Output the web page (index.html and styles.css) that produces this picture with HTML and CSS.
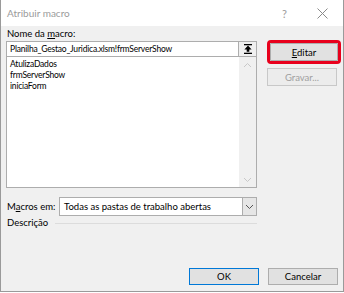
FILE: index.html
```html
<!DOCTYPE html>
<html lang="pt">
<head>
    <meta charset="UTF-8">
    <title>Atribuir macro</title>
    <link rel="stylesheet" href="styles.css">
</head>
<body>
    <div class="dialog">
        <div class="titlebar">
            <span class="title">Atribuir macro</span>
            <span class="help">?</span>
            <svg class="close" width="11" height="11" viewBox="0 0 11 11">
                <path d="M0.5 0.5 L10.5 10.5 M10.5 0.5 L0.5 10.5" stroke="#8a8a8a" stroke-width="1" fill="none"/>
            </svg>
        </div>
        <div class="content">
            <div class="left">
                <div class="label">Nome da <u>m</u>acro:</div>
                <div class="name-row">
                    <div class="name-input">Planilha_Gestao_Juridica.xlsm!frmServerShow</div>
                    <div class="pick-btn">
                        <svg width="8" height="10" viewBox="0 0 8 10">
                            <rect x="0" y="0" width="8" height="1.3" fill="#000"/>
                            <path d="M4 1.6 L7.6 5.4 L5.3 5.4 L5.3 7.8 L2.7 7.8 L2.7 5.4 L0.4 5.4 Z" fill="#000"/>
                            <rect x="0" y="8.7" width="8" height="1.3" fill="#000"/>
                        </svg>
                    </div>
                </div>
                <div class="listbox">
                    <ul class="items">
                        <li>AtulizaDados</li>
                        <li>frmServerShow</li>
                        <li>iniciaForm</li>
                    </ul>
                    <div class="scroll">
                        <svg width="9" height="6" viewBox="0 0 9 6"><path d="M1 5 L4.5 1.5 L8 5" stroke="#c8c8c8" fill="none"/></svg>
                        <svg width="9" height="6" viewBox="0 0 9 6"><path d="M1 1 L4.5 4.5 L8 1" stroke="#c8c8c8" fill="none"/></svg>
                    </div>
                </div>
                <div class="macros-row">
                    <span class="label">M<u>a</u>cros em:</span>
                    <div class="select">
                        <span class="select-text">Todas as pastas de trabalho abertas</span>
                        <span class="select-arrow">
                            <svg width="9" height="6" viewBox="0 0 9 6"><path d="M1 1 L4.5 4.5 L8 1" stroke="#555" fill="none"/></svg>
                        </span>
                    </div>
                </div>
                <div class="desc-row">
                    <span class="label">Descrição</span>
                    <span class="rule"></span>
                </div>
            </div>
            <div class="right">
                <div class="highlight">
                    <button class="btn"><u>E</u>ditar</button>
                </div>
                <button class="btn disabled">Gravar...</button>
            </div>
        </div>
        <div class="footer">
            <button class="btn default">OK</button>
            <button class="btn">Cancelar</button>
        </div>
    </div>
</body>
</html>
```

FILE: styles.css
```css
body {
    margin: 0;
    padding: 0;
    background-color: #fff;
    font-family: Lato, "Noto Sans", sans-serif;
    font-size: 9.5px;
    color: #000;
}

.dialog {
    width: 342px;
    height: 291px;
    border: 1px solid #9a9a9a;
    border-top: none;
    background-color: #f0f0f0;
    display: flex;
    flex-direction: column;
}

.titlebar {
    height: 26px;
    background-color: #fff;
    display: flex;
    align-items: center;
    padding-left: 6px;
}

.title {
    flex: 1;
    font-size: 10px;
    color: #9b9b9b;
}

.help {
    font-size: 11px;
    color: #9b9b9b;
    margin-right: 30px;
}

.close {
    margin-right: 15px;
}

.content {
    display: flex;
    padding: 0 5px 0 5px;
    gap: 9px;
}

.left {
    width: 253px;
}

.label {
    height: 15px;
    line-height: 16px;
    padding-left: 1px;
}

.name-row {
    display: flex;
    height: 16px;
    border: 1px solid #adadad;
    background-color: #fff;
    box-sizing: border-box;
}

.name-input {
    flex: 1;
    line-height: 14px;
    padding-left: 3px;
    font-size: 8.5px;
    letter-spacing: -0.2px;
}

.pick-btn {
    width: 17px;
    border-left: 1px solid #adadad;
    background-color: #f0f0f0;
    display: flex;
    align-items: center;
    justify-content: center;
}

.listbox {
    height: 131px;
    border: 1px solid #adadad;
    border-top: none;
    background-color: #fff;
    display: flex;
    box-sizing: border-box;
}

.items {
    flex: 1;
    list-style-type: none;
    margin: 0;
    padding: 2px 0 0 3px;
    font-size: 8.5px;
    letter-spacing: -0.2px;
}

.items li {
    height: 11px;
    line-height: 11px;
}

.scroll {
    width: 17px;
    background-color: #f0f0f0;
    display: flex;
    flex-direction: column;
    justify-content: space-between;
    align-items: center;
    padding: 5px 0 4px 0;
}

.macros-row {
    display: flex;
    align-items: center;
    margin-top: 9px;
    height: 19px;
}

.macros-row .label {
    width: 52px;
    height: auto;
}

.select {
    flex: 1;
    height: 19px;
    display: flex;
    border: 1px solid #adadad;
    background-color: #fff;
    box-sizing: border-box;
}

.select-text {
    flex: 1;
    padding-left: 4px;
    line-height: 17px;
}

.select-arrow {
    width: 13px;
    border-left: 1px solid #adadad;
    background-color: #e6e6e6;
    display: flex;
    align-items: center;
    justify-content: center;
}

.desc-row {
    display: flex;
    align-items: center;
    height: 14px;
}

.desc-row .label {
    height: auto;
}

.rule {
    flex: 1;
    height: 1px;
    margin-left: 7px;
    background-color: #dcdcdc;
}

.right {
    width: 72px;
    padding-top: 14px;
}

.btn {
    display: block;
    width: 70px;
    height: 18px;
    padding: 0;
    font-family: Lato, "Noto Sans", sans-serif;
    font-size: 9.5px;
    color: #000;
    background-color: #e1e1e1;
    border: 1px solid #adadad;
}

.highlight {
    border: 3px solid #e8001c;
    border-radius: 4px;
    width: 68px;
    height: 18px;
    margin-left: 1px;
    padding: 0;
    overflow: hidden;
}

.highlight .btn {
    width: 68px;
}

.btn.disabled {
    margin-top: 4px;
    margin-left: 1px;
    color: #a0a0a0;
    background-color: #ececec;
    border-color: #c8c8c8;
}

.btn.default {
    border-color: #0078d7;
}

.footer {
    margin-top: auto;
    display: flex;
    justify-content: flex-end;
    gap: 9px;
    padding: 0 5px 6px 0;
}

.footer .btn {
    height: 17px;
}
```
